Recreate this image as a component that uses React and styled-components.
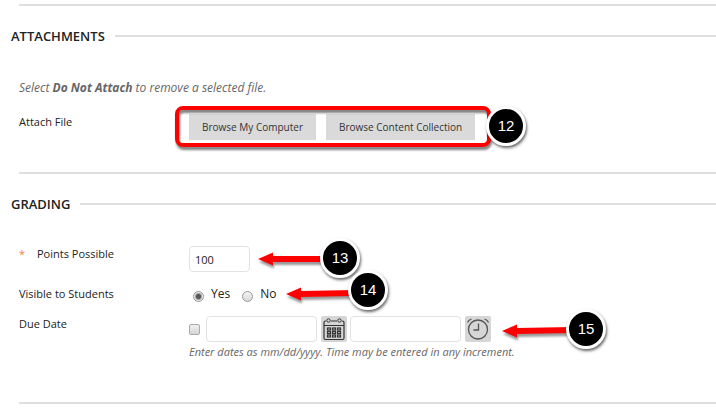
import * as React from "react";
import styled, { createGlobalStyle } from "styled-components";

const GlobalStyles = createGlobalStyle`
  *, *::before, *::after {
    box-sizing: border-box;
  }

  body {
    margin: 0;
    background: #fff;
    color: #222;
    font: 11px/16px "Open Sans", "Noto Sans", sans-serif;
  }

  button, input {
    font: inherit;
    color: inherit;
  }
`;

const PageStyles = styled.main`
  display: flex;
  flex-direction: column;
  padding: 4px 0 12px 11px;
`;

const Rule = styled.hr`
  width: auto;
  height: 2px;
  margin: 0 0 0 8px;
  border: 0;
  background: #dedede;
`;

const SectionStyles = styled.section`
  padding: 20px 0 ${({ $bottom }) => $bottom}px;
`;

const SectionTitle = styled.h2`
  display: flex;
  align-items: center;
  gap: 10px;
  margin: 0;
  font-size: 13px;
  font-weight: 600;
  line-height: 20px;
  text-transform: uppercase;

  &::after {
    content: "";
    flex: 1;
    height: 2px;
    background: #dedede;
  }
`;

const SectionBody = styled.div`
  display: flex;
  flex-direction: column;
  gap: ${({ $gap }) => $gap}px;
  padding: 32px 0 0 8px;
`;

const Hint = styled.p`
  margin: 0;
  color: #666;
  font-size: ${({ $small }) => ($small ? 11 : 12)}px;
  font-style: italic;
  line-height: 20px;
`;

const Row = styled.div`
  display: grid;
  grid-template-columns: 170px 1fr;
  align-items: ${({ $align }) => $align || "start"};
`;

const Required = styled.span`
  display: inline-block;
  width: 18px;
  color: #f47b3c;
`;

// positioned so the numbered callouts can hang off the control they explain
const Field = styled.div`
  position: relative;
  display: flex;
  align-items: center;
  justify-self: start;
  gap: ${({ $gap }) => $gap || 0}px;
`;

const BrowseButton = styled.button`
  height: 26px;
  padding: 0 13px;
  border: 0;
  background: #dadada;
  color: #333;
  font-size: 10px;
`;

const Highlight = styled.div`
  position: absolute;
  inset: -8px -16px -7px -14px;
  border: 4px solid #f00;
  border-radius: 8px;
  filter: drop-shadow(1px 3px 1px rgba(0, 0, 0, 0.5));
  pointer-events: none;
`;

const TextInput = styled.input`
  width: ${({ $width }) => $width}px;
  height: 26px;
  padding: 0 5px;
  border: 1px solid #e2e2e2;
  border-radius: 4px;
  background: #fff;
`;

const Radio = styled.input`
  appearance: none;
  width: 11px;
  height: 11px;
  margin: 4px 7px 0 0;
  border: 1px solid #999;
  border-radius: 50%;
  background: linear-gradient(#f4f4f4, #d8d8d8);

  &:checked {
    background: radial-gradient(circle, #555 0 2px, #e8e8e8 4px);
  }
`;

const RadioGroup = styled.div`
  display: flex;
  gap: 12px;
  padding-left: 4px;
`;

const RadioLabel = styled.label`
  display: flex;
  align-items: center;
  height: 20px;
  font-size: 12px;
`;

const Checkbox = styled.input`
  appearance: none;
  width: 11px;
  height: 11px;
  margin: 0 6px 0 0;
  border: 1px solid #aaa;
  border-radius: 2px;
  background: linear-gradient(#f0f0f0, #d6d6d6);

  &:checked {
    background: #555;
  }
`;

const IconButton = styled.button`
  display: grid;
  place-items: center;
  width: 26px;
  height: 26px;
  margin: 0 3px 0 4px;
  padding: 0;
  border: 0;
  border-radius: 2px;
  background: #d6d6d6;
  color: #333;
`;

const CalloutStyles = styled.div`
  position: absolute;
  top: ${({ $y }) => $y}px;
  left: ${({ $x }) => $x}px;
  display: flex;
  align-items: center;
  pointer-events: none;

  svg {
    margin-right: -6px;
    overflow: visible;
    filter: drop-shadow(1px 3px 1px rgba(0, 0, 0, 0.4));
  }
`;

const Badge = styled.span`
  position: relative;
  width: 40px;
  height: 40px;
  border: 3px solid #fff;
  border-radius: 50%;
  background: #000;
  box-shadow: 1px 2px 3px rgba(0, 0, 0, 0.6);
  color: #fff;
  font: 15px/34px "Liberation Sans", Arial, sans-serif;
  text-align: center;
`;

// tip and tail are the heights of the arrow's two ends, from the svg's top
const Callout = ({ number, x, y, arrow, tip = 8, tail = 8 }) => (
  <CalloutStyles $x={x} $y={y}>
    {arrow && (
      <svg width={arrow} height="16" aria-hidden="true">
        <path
          d={`M0 ${tip}L15 ${tip - 6.5}V${tip - 3}L${arrow} ${tail - 3}V${tail + 3}L15 ${tip + 3}V${tip + 6.5}z`}
          fill="#f00"
        />
      </svg>
    )}
    <Badge>{number}</Badge>
  </CalloutStyles>
);

const CalendarIcon = () => (
  <svg width="24" height="24" viewBox="0 0 24 24" fill="none" stroke="currentColor" aria-hidden="true">
    <path d="M4 4H3.500Q2 4 2 5.500V21Q2 22.500 3.500 22.500H20.500Q22 22.500 22 21V5.500Q22 4 20.500 4H20M9 4H15M2 8.500H22" strokeWidth="1.200" />
    <circle cx="6.500" cy="3.500" r="1.700" />
    <circle cx="17.500" cy="3.500" r="1.700" />
    {[12, 15.5, 19].map((y) =>
      [7, 12, 17].map((x) => (
        <rect key={`${x}-${y}`} x={x - 1.5} y={y - 1} width="3" height="2" strokeWidth="1.200" />
      ))
    )}
  </svg>
);

const ClockIcon = () => (
  <svg width="24" height="24" viewBox="0 0 24 24" fill="none" stroke="#555" strokeWidth="1.300" aria-hidden="true">
    <circle cx="12" cy="12.500" r="9.500" />
    <path d="M12.500 6.500V13H7.500M1.500 5.500Q2.500 3 5.500 2M22.500 5.500Q21.500 3 18.500 2" />
  </svg>
);

const Attachments = () => (
  <SectionStyles $bottom={32}>
    <SectionTitle>Attachments</SectionTitle>
    <SectionBody $gap={16}>
      <Hint>
        Select <strong>Do Not Attach</strong> to remove a selected file.
      </Hint>
      <Row role="group" aria-labelledby="attach-label">
        <span id="attach-label">Attach File</span>
        <Field $gap={10}>
          <BrowseButton type="button">Browse My Computer</BrowseButton>
          <BrowseButton type="button">Browse Content Collection</BrowseButton>
          <Highlight />
          <Callout number={12} x={297} y={-8} />
        </Field>
      </Row>
    </SectionBody>
  </SectionStyles>
);

const Grading = () => (
  <SectionStyles $bottom={40}>
    <SectionTitle>Grading</SectionTitle>
    <SectionBody $gap={12}>
      <Row>
        <label htmlFor="points">
          <Required>*</Required>
          Points Possible
        </label>
        <Field>
          <TextInput id="points" $width={61} defaultValue="100" />
          <Callout number={13} x={69} y={-8} arrow={68} tip={9} tail={9} />
        </Field>
      </Row>
      <Row $align="center" role="radiogroup" aria-labelledby="visible-label">
        <span id="visible-label">Visible to Students</span>
        <Field>
          <RadioGroup>
            <RadioLabel>
              <Radio type="radio" name="visible" defaultChecked />
              Yes
            </RadioLabel>
            <RadioLabel>
              <Radio type="radio" name="visible" />
              No
            </RadioLabel>
          </RadioGroup>
          <Callout number={14} x={97} y={-14} arrow={68} tip={12} tail={11} />
        </Field>
      </Row>
      <Row role="group" aria-labelledby="due-label">
        <span id="due-label">Due Date</span>
        <div>
          <Field>
            <Checkbox type="checkbox" aria-label="Use due date" />
            <TextInput $width={111} aria-label="Due date" />
            <IconButton type="button" aria-label="Choose date">
              <CalendarIcon />
            </IconButton>
            <TextInput $width={111} aria-label="Due time" />
            <IconButton type="button" aria-label="Choose time">
              <ClockIcon />
            </IconButton>
            <Callout number={15} x={313} y={-7} arrow={70} tip={10} tail={9} />
          </Field>
          <Hint $small>
            Enter dates as mm/dd/yyyy. Time may be entered in any increment.
          </Hint>
        </div>
      </Row>
    </SectionBody>
  </SectionStyles>
);

const App = () => (
  <>
    <GlobalStyles />
    <PageStyles>
      <Rule />
      <Attachments />
      <Rule />
      <Grading />
      <Rule />
    </PageStyles>
  </>
);

export default App;
